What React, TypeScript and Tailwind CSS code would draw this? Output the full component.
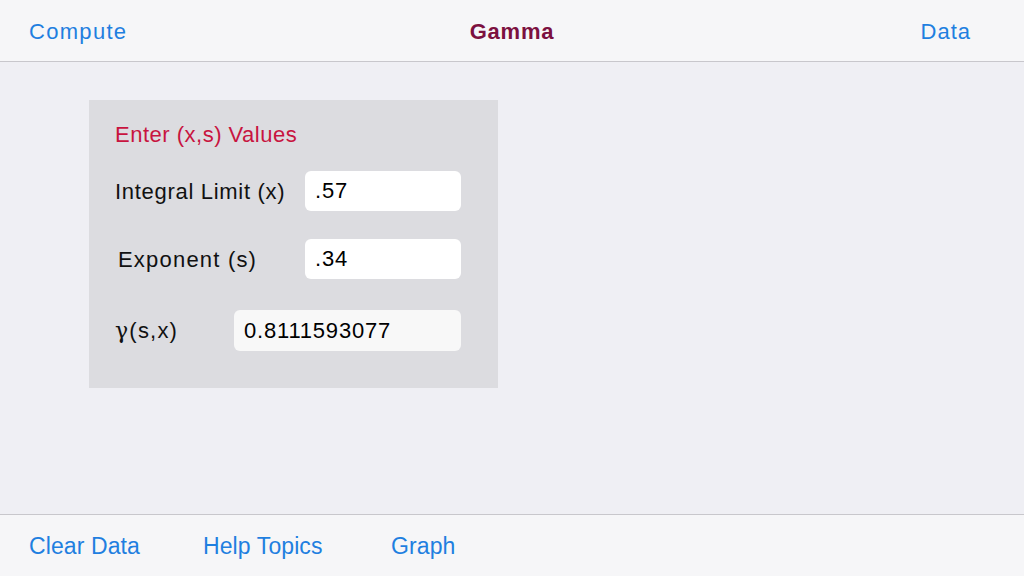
import React, { useState } from 'react';

const font = { fontFamily: '"Liberation Sans", Arial, sans-serif' };

export default function App() {
  const [x, setX] = useState('.57');
  const [s, setS] = useState('.34');

  return (
    <div className="w-[1024px] h-[576px] flex flex-col bg-[#efeff4] overflow-hidden" style={font}>
      {/* Top bar */}
      <div className="h-[62px] shrink-0 grid grid-cols-3 items-center px-[29px] pt-[2px] bg-[#f6f6f8] border-b border-[#c8c7cc]">
        <button className="justify-self-start text-[22px] text-[#1f7fe0] tracking-[1.3px]">Compute</button>
        <h1 className="justify-self-center text-[22px] font-bold text-[#7c1040] tracking-[0.8px]">Gamma</h1>
        <button className="justify-self-end mr-[24px] text-[22px] text-[#1f7fe0] tracking-[1px]">Data</button>
      </div>

      {/* Content */}
      <div className="flex-1 pl-[89px] pt-[38px]">
        <div className="w-[409px] h-[288px] bg-[#dcdce0] pl-[26px] pr-[37px] pt-[21px] tracking-[0.8px]">
          <p className="text-[22px] text-[#c8143f] leading-[28px] tracking-[0.5px]">Enter (x,s) Values</p>

          <div className="mt-[22px] flex items-center justify-between">
            <span className="text-[22px] text-[#111] tracking-[0.7px]">Integral Limit (x)</span>
            <input
              value={x}
              onChange={(e) => setX(e.target.value)}
              className="w-[156px] h-[40px] rounded-[6px] bg-white px-[10px] text-[22px] text-black outline-none"
            />
          </div>

          <div className="mt-[28px] flex items-center justify-between">
            <span className="ml-[3px] text-[22px] text-[#111] tracking-[1.2px]">Exponent (s)</span>
            <input
              value={s}
              onChange={(e) => setS(e.target.value)}
              className="w-[156px] h-[40px] rounded-[6px] bg-white px-[10px] text-[22px] text-black outline-none"
            />
          </div>

          <div className="mt-[31px] flex items-center justify-between">
            <span className="text-[22px] text-[#111] tracking-[1.2px]">
              <span style={{ fontFamily: '"DejaVu Serif", serif' }} className="text-[22px]">γ</span>(s,x)
            </span>
            <div className="w-[227px] h-[41px] rounded-[6px] bg-[#f8f8f8] px-[10px] flex items-center text-[22px] text-black">
              0.8111593077
            </div>
          </div>
        </div>
      </div>

      {/* Bottom bar */}
      <div className="h-[62px] shrink-0 flex items-center px-[29px] pt-[2px] bg-[#f6f6f8] border-t border-[#c8c7cc] text-[23px] text-[#1f7fe0] tracking-[0.1px]">
        <button className="w-[174px] text-left">Clear Data</button>
        <button className="w-[188px] text-left">Help Topics</button>
        <button className="text-left">Graph</button>
      </div>
    </div>
  );
}
